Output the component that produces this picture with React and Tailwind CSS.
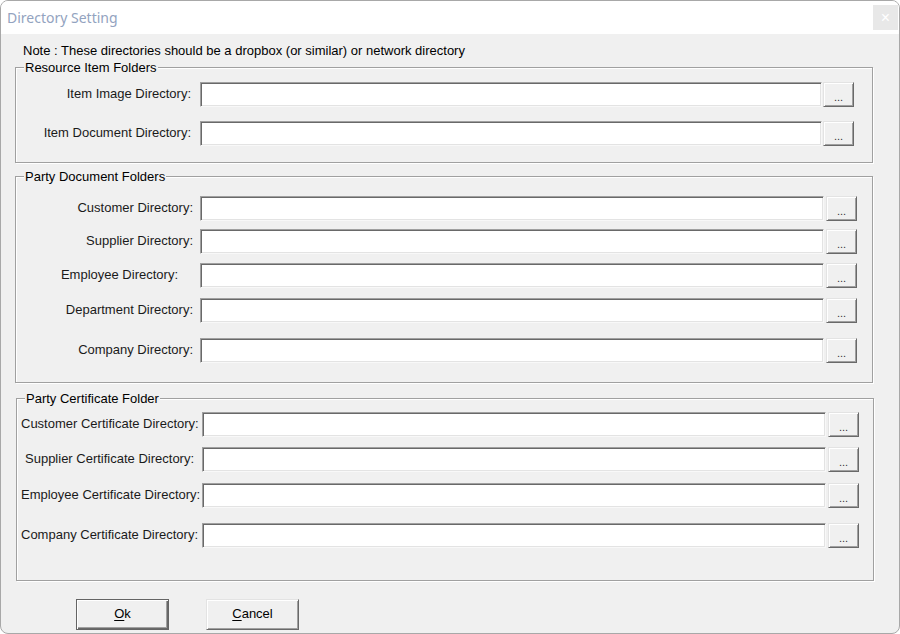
import React from "react";

const font = { fontFamily: '"Liberation Sans", Arial, sans-serif' };

// sunken text box
const Field = ({ w }) => (
  <div
    className={`h-[25px] bg-white border border-t-[#a0a0a0] border-l-[#a0a0a0] border-b-[#f8f8f8] border-r-[#f8f8f8] shadow-[inset_1px_1px_0_#696969,inset_-1px_-1px_0_#e3e3e3] ${w}`}
  />
);

// raised "..." button
const Browse = ({ ml }) => (
  <button
    className={`h-[25px] w-[31px] bg-[#f0f0f0] border border-t-[#e3e3e3] border-l-[#e3e3e3] border-b-[#696969] border-r-[#696969] shadow-[inset_1px_1px_0_#ffffff,inset_-1px_-1px_0_#a0a0a0] flex items-end justify-center pb-[5px] text-[11px] leading-[8px] text-[#333] ${ml}`}
  >
    ...
  </button>
);

const Group = ({ title, h, mt, pt, children }) => (
  <div
    className={`relative w-[858px] border border-[#a0a0a0] shadow-[inset_1px_1px_0_#ffffff,1px_1px_0_#ffffff] ${h} ${mt} ${pt}`}
  >
    <div className="absolute -top-[8px] left-[8px] bg-[#f0f0f0] px-[1px] text-[13px] leading-[15px] text-black">
      {title}
    </div>
    {children}
  </div>
);

const Row = ({ label, labelCls, fieldW, btnMl, mt }) => (
  <div className={`flex items-center ${mt}`}>
    <div className={`text-[13px] leading-[15px] mb-[3px] text-[#1a1a1a] whitespace-nowrap ${labelCls}`}>
      {label}
    </div>
    <Field w={fieldW} />
    <Browse ml={btnMl} />
  </div>
);

export default function App() {
  return (
    <div className="w-[900px] h-[634px] bg-white" style={font}>
      <div className="w-[900px] h-[634px] flex flex-col border border-[#a8a8a8] rounded-[8px] overflow-hidden bg-[#f0f0f0]">
        {/* title bar */}
        <div className="h-[33px] bg-white flex items-center justify-between pl-[6px] pr-[1px] shrink-0">
          <span
            className="text-[14px] text-[#93a3c0]"
            style={{ fontFamily: '"Noto Sans", "Open Sans", sans-serif' }}
          >
            Directory Setting
          </span>
          <div className="w-[25px] h-[25px] bg-[#e8e8e8] flex items-center justify-center text-white text-[16px] leading-none">
            ×
          </div>
        </div>

        {/* body */}
        <div className="flex flex-col pl-[14px] pt-[10px]">
          <div className="pl-[8px] text-[13px] leading-[14px] text-black">
            Note : These directories should be a dropbox (or similar) or network directory
          </div>

          <Group title="Resource Item Folders" h="h-[96px]" mt="mt-[9px]" pt="pt-[14px]">
            <Row label="Item Image Directory:" labelCls="w-[175px] text-right mr-[9px]" fieldW="w-[622px]" btnMl="ml-[1px]" />
            <Row label="Item Document Directory:" labelCls="w-[175px] text-right mr-[9px]" fieldW="w-[622px]" btnMl="ml-[1px]" mt="mt-[14px]" />
          </Group>

          <Group title="Party Document Folders" h="h-[207px]" mt="mt-[13px]" pt="pt-[19px]">
            <Row label="Customer Directory:" labelCls="w-[177px] text-right mr-[7px]" fieldW="w-[624px]" btnMl="ml-[2px]" />
            <Row label="Supplier Directory:" labelCls="w-[177px] text-right mr-[7px]" fieldW="w-[624px]" btnMl="ml-[2px]" mt="mt-[8px]" />
            <Row label="Employee Directory:" labelCls="w-[177px] text-right pr-[15px] mr-[7px]" fieldW="w-[624px]" btnMl="ml-[2px]" mt="mt-[9px]" />
            <Row label="Department Directory:" labelCls="w-[177px] text-right mr-[7px]" fieldW="w-[624px]" btnMl="ml-[2px]" mt="mt-[10px]" />
            <Row label="Company Directory:" labelCls="w-[177px] text-right mr-[7px]" fieldW="w-[624px]" btnMl="ml-[2px]" mt="mt-[15px]" />
          </Group>

          <div className="ml-[1px]">
            <Group title="Party Certificate Folder" h="h-[183px]" mt="mt-[15px]" pt="pt-[13px]">
              <Row label="Customer Certificate Directory:" labelCls="w-[185px] pl-[4px]" fieldW="w-[624px]" btnMl="ml-[2px]" />
              <Row label="Supplier Certificate Directory:" labelCls="w-[185px] pl-[8px]" fieldW="w-[624px]" btnMl="ml-[2px]" mt="mt-[10px]" />
              <Row label="Employee Certificate Directory:" labelCls="w-[185px] pl-[4px]" fieldW="w-[624px]" btnMl="ml-[2px]" mt="mt-[11px]" />
              <Row label="Company Certificate Directory:" labelCls="w-[185px] pl-[4px]" fieldW="w-[624px]" btnMl="ml-[2px]" mt="mt-[15px]" />
            </Group>
          </div>

          {/* buttons */}
          <div className="flex mt-[18px] pl-[61px] gap-[37px]">
            <button className="w-[93px] h-[31px] border border-[#646464] bg-[#f0f0f0] shadow-[inset_1px_1px_0_#ffffff,inset_-1px_-1px_0_#696969,inset_-2px_-2px_0_#a0a0a0] text-[13px] text-black pb-[2px]">
              <span className="underline underline-offset-2">O</span>k
            </button>
            <button className="w-[93px] h-[31px] bg-[#f0f0f0] border border-t-[#e3e3e3] border-l-[#e3e3e3] border-b-[#696969] border-r-[#696969] shadow-[inset_1px_1px_0_#ffffff,inset_-1px_-1px_0_#a0a0a0] text-[13px] text-black pb-[2px]">
              <span className="underline underline-offset-2">C</span>ancel
            </button>
          </div>
        </div>
      </div>
    </div>
  );
}
